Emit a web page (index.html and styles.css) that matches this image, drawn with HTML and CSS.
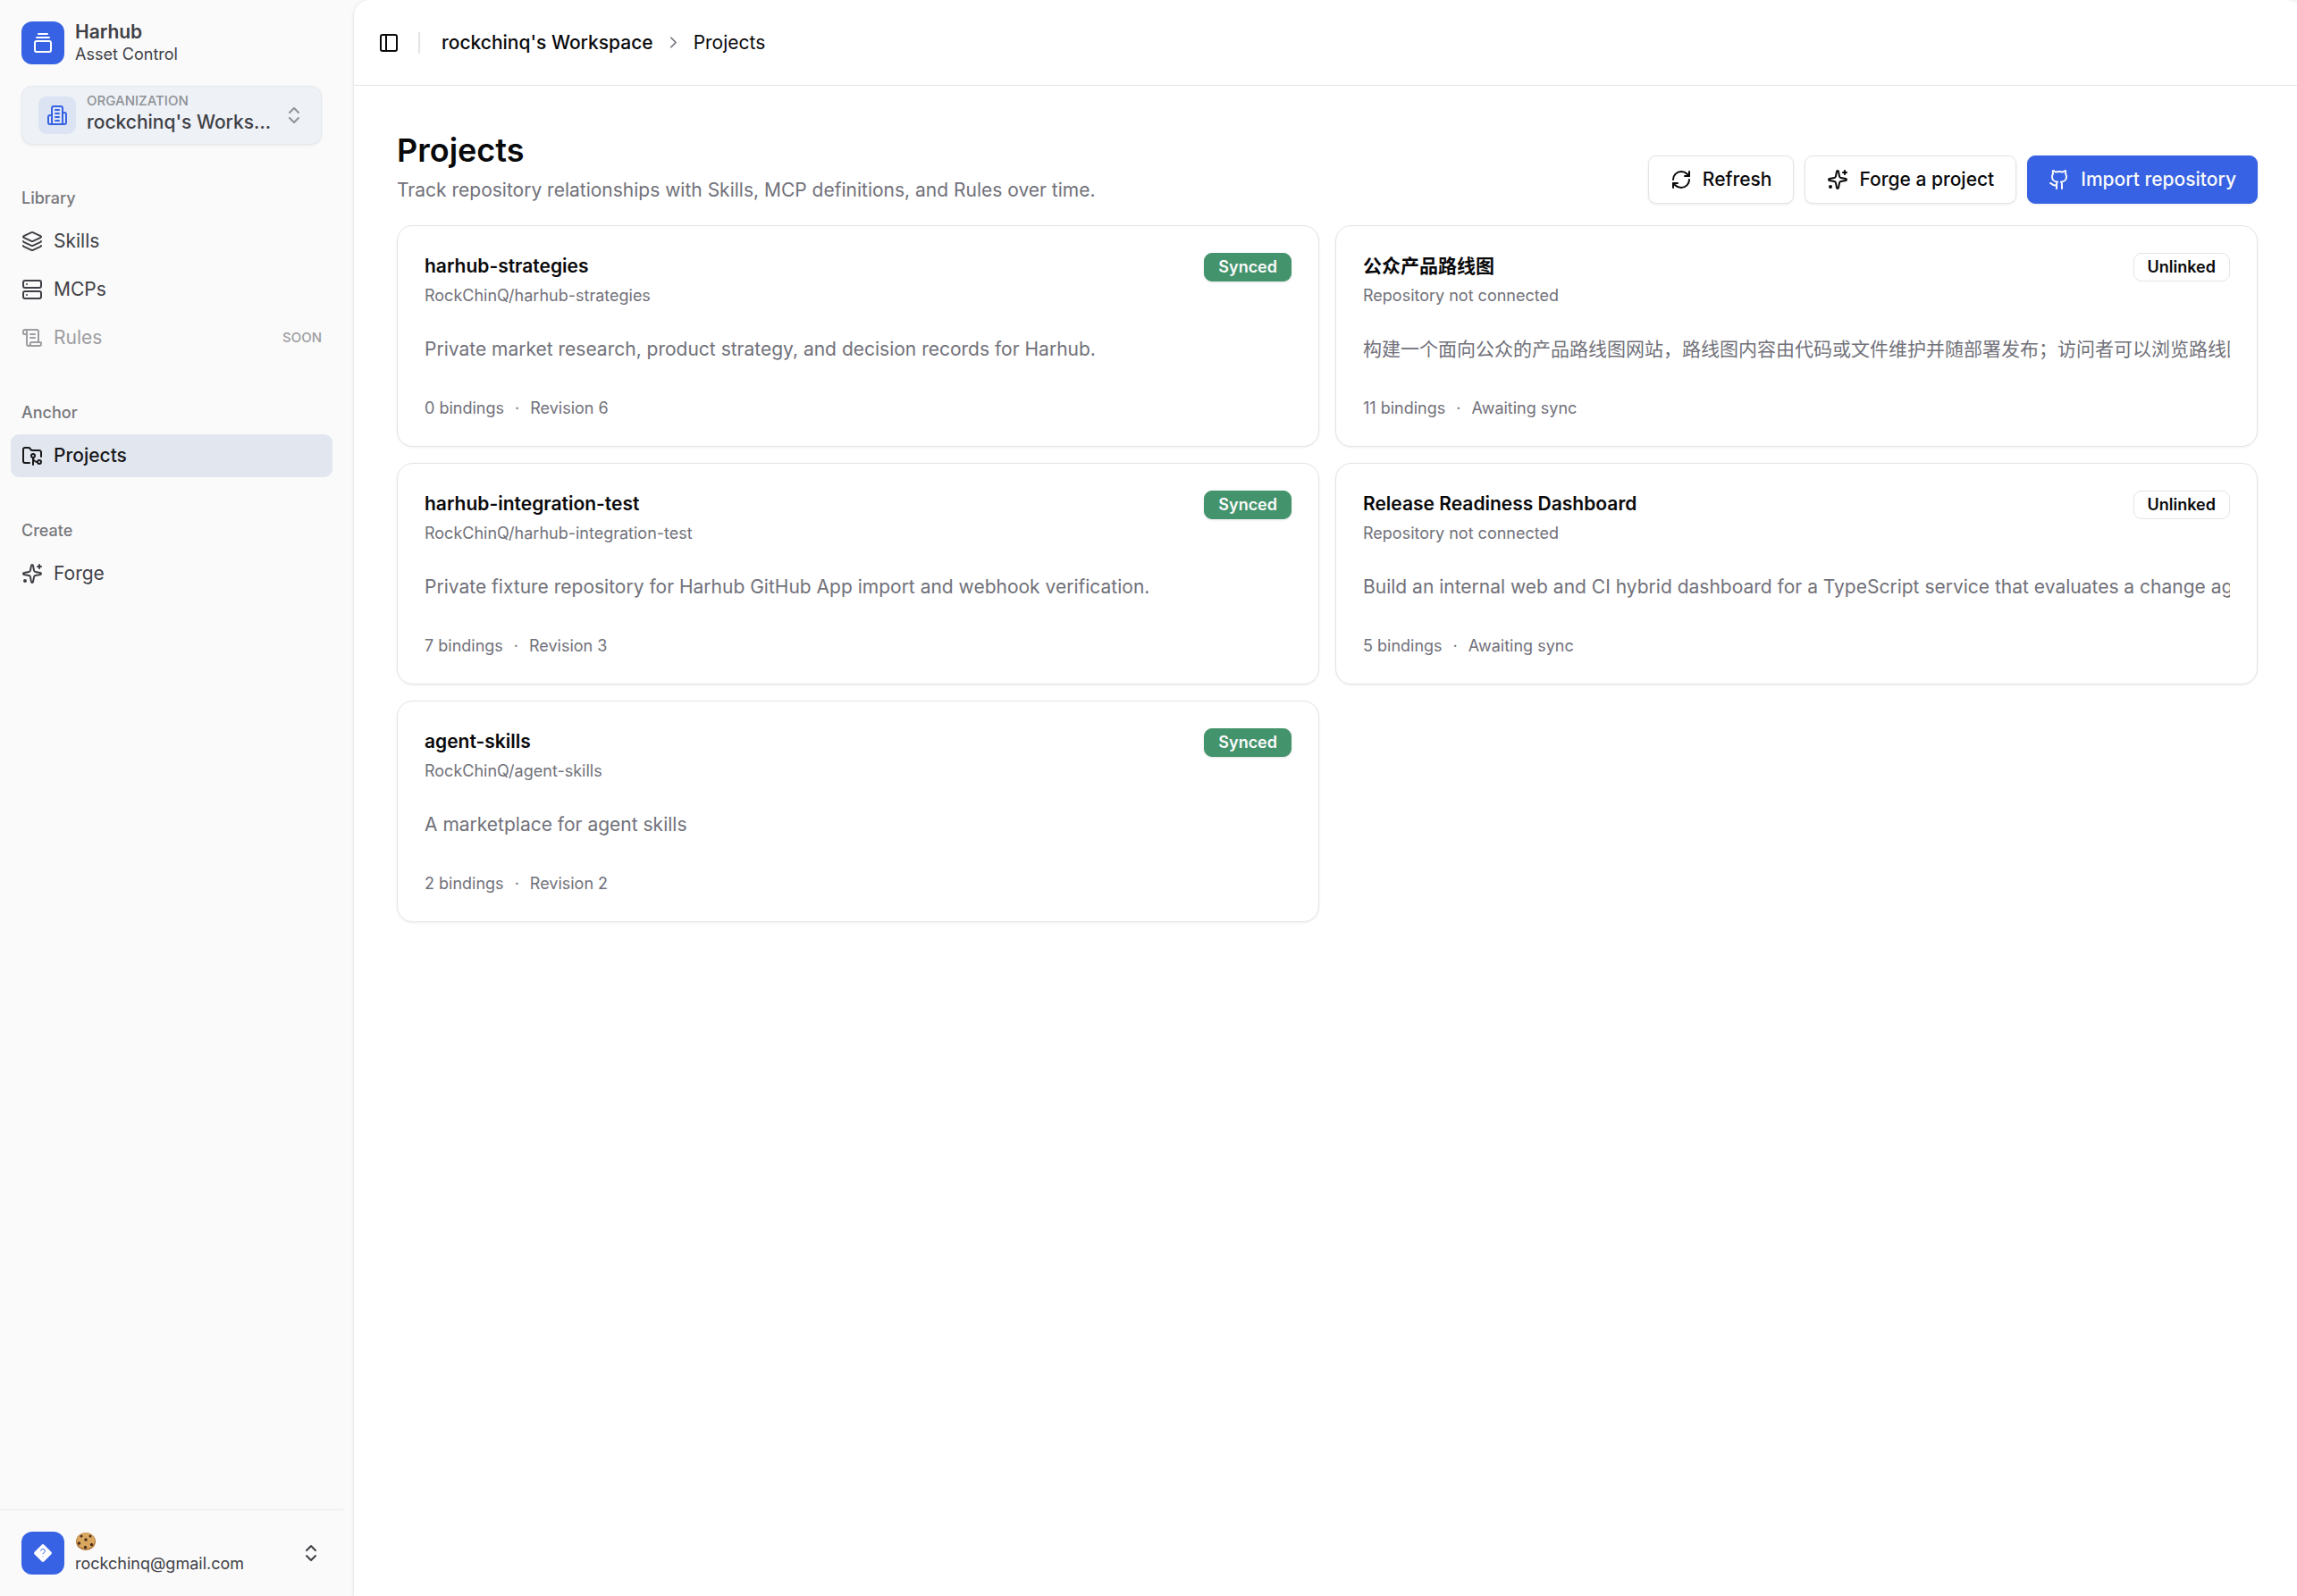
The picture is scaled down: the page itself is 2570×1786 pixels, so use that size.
FILE: index.html
```html
<!DOCTYPE html>
<html lang="en">
<head>
    <meta charset="UTF-8">
    <meta name="viewport" content="width=device-width, initial-scale=1.0">
    <title>Projects - Harhub</title>
    <link rel="stylesheet" href="styles.css">
</head>
<body>
    <svg width="0" height="0" class="sprite" aria-hidden="true">
        <symbol id="i-updown" viewBox="0 0 24 24"><path d="m7 15 5 5 5-5"/><path d="m7 9 5-5 5 5"/></symbol>
        <symbol id="i-sparkles" viewBox="0 0 24 24">
            <path d="M11.017 2.814a1 1 0 0 1 1.966 0l1.051 5.558a2 2 0 0 0 1.594 1.594l5.558 1.051a1 1 0 0 1 0 1.966l-5.558 1.051a2 2 0 0 0-1.594 1.594l-1.051 5.558a1 1 0 0 1-1.966 0l-1.051-5.558a2 2 0 0 0-1.594-1.594l-5.558-1.051a1 1 0 0 1 0-1.966l5.558-1.051a2 2 0 0 0 1.594-1.594z"/>
            <path d="M20 2v4"/><path d="M22 4h-4"/><circle cx="4" cy="20" r="2" class="dot"/>
        </symbol>
    </svg>
    <div class="app">
        <aside class="sidebar">
            <div class="sidebar-header">
                <a href="#" class="brand">
                    <span class="logo">
                        <svg class="icon" viewBox="0 0 24 24"><path d="M7 2h10"/><path d="M5 6h14"/><rect width="18" height="12" x="3" y="10" rx="2"/></svg>
                    </span>
                    <span class="brand-text">
                        <span class="brand-name">Harhub</span>
                        <span class="small">Asset Control</span>
                    </span>
                </a>
                <button type="button" class="org-switcher">
                    <span class="org-icon">
                        <svg class="icon" viewBox="0 0 24 24"><path d="M6 22V4a2 2 0 0 1 2-2h8a2 2 0 0 1 2 2v18Z"/><path d="M6 12H4a2 2 0 0 0-2 2v6a2 2 0 0 0 2 2h2"/><path d="M18 9h2a2 2 0 0 1 2 2v9a2 2 0 0 1-2 2h-2"/><path d="M10 6h4"/><path d="M10 10h4"/><path d="M10 14h4"/><path d="M10 18h4"/></svg>
                    </span>
                    <span class="org-text">
                        <span class="org-label">ORGANIZATION</span>
                        <span class="org-name">rockchinq's Workspace</span>
                    </span>
                    <svg class="icon muted-icon"><use href="#i-updown"/></svg>
                </button>
            </div>

            <nav class="nav">
                <section class="nav-group">
                    <h2 class="nav-label">Library</h2>
                    <a href="#" class="nav-item">
                        <svg class="icon" viewBox="0 0 24 24"><path d="M12.83 2.18a2 2 0 0 0-1.66 0L2.6 6.08a1 1 0 0 0 0 1.83l8.58 3.91a2 2 0 0 0 1.66 0l8.58-3.9a1 1 0 0 0 0-1.83z"/><path d="M2 12a1 1 0 0 0 .58.91l8.6 3.91a2 2 0 0 0 1.65 0l8.58-3.9A1 1 0 0 0 22 12"/><path d="M2 17a1 1 0 0 0 .58.91l8.6 3.91a2 2 0 0 0 1.65 0l8.58-3.9A1 1 0 0 0 22 17"/></svg>
                        Skills
                    </a>
                    <a href="#" class="nav-item">
                        <svg class="icon" viewBox="0 0 24 24"><rect width="20" height="8" x="2" y="2" rx="2"/><rect width="20" height="8" x="2" y="14" rx="2"/><path d="M6 6h.01"/><path d="M6 18h.01"/></svg>
                        MCPs
                    </a>
                    <a class="nav-item disabled" aria-disabled="true">
                        <svg class="icon" viewBox="0 0 24 24"><path d="M15 12h-5"/><path d="M15 8h-5"/><path d="M19 17V5a2 2 0 0 0-2-2H4"/><path d="M8 21h12a2 2 0 0 0 2-2v-1a1 1 0 0 0-1-1H11a1 1 0 0 0-1 1v1a2 2 0 1 1-4 0V5a2 2 0 1 0-4 0v2a1 1 0 0 0 1 1h3"/></svg>
                        Rules
                        <span class="soon">SOON</span>
                    </a>
                </section>
                <section class="nav-group">
                    <h2 class="nav-label">Anchor</h2>
                    <a href="#" class="nav-item active" aria-current="page">
                        <svg class="icon" viewBox="0 0 24 24"><path d="M9 20H4a2 2 0 0 1-2-2V5a2 2 0 0 1 2-2h3.9a2 2 0 0 1 1.69.9l.81 1.2a2 2 0 0 0 1.67.9H20a2 2 0 0 1 2 2v5"/><circle cx="13" cy="12" r="2"/><path d="M18 19c-2.8 0-5-2.2-5-5v8"/><circle cx="20" cy="19" r="2"/></svg>
                        Projects
                    </a>
                </section>
                <section class="nav-group">
                    <h2 class="nav-label">Create</h2>
                    <a href="#" class="nav-item">
                        <svg class="icon"><use href="#i-sparkles"/></svg>
                        Forge
                    </a>
                </section>
            </nav>

            <button type="button" class="user-menu">
                <span class="logo">
                    <svg class="avatar" viewBox="0 0 20 20"><rect x="2.500" y="2.500" width="15" height="15" rx="2" fill="#fff" transform="rotate(45 10 10)"/><path d="M7.700 7.600a2.300 2.300 0 1 1 3.300 2.100c-.7.300-1 .7-1 1.500M10 13.600v.6" fill="none" stroke="#3662e3"/></svg>
                </span>
                <span class="brand-text">
                    <svg class="cookie" viewBox="0 0 24 24" role="img" aria-label="cookie">
                        <ellipse cx="12" cy="11" rx="11" ry="10" fill="#b57c3c"/>
                        <ellipse cx="12" cy="10" rx="10" ry="9" fill="#d9a760"/>
                        <g fill="#4a2c1c"><circle cx="7" cy="5" r="1.500"/><circle cx="17" cy="5" r="1.500"/><circle cx="12" cy="9" r="1.700"/><circle cx="4.500" cy="13" r="1.700"/><circle cx="18.500" cy="14.500" r="1.700"/><circle cx="11.500" cy="17.500" r="1.700"/></g>
                    </svg>
                    <span class="small">rockchinq@gmail.com</span>
                </span>
                <svg class="icon"><use href="#i-updown"/></svg>
            </button>
        </aside>

        <main class="main">
            <header class="topbar">
                <button type="button" class="toggle" aria-label="Toggle sidebar">
                    <svg class="icon" viewBox="0 0 24 24"><rect width="18" height="18" x="3" y="3" rx="2"/><path d="M9 3v18"/></svg>
                </button>
                <span class="separator"></span>
                <nav class="breadcrumb">
                    <a href="#" class="crumb-link">rockchinq's Workspace</a>
                    <svg class="icon chevron" viewBox="0 0 24 24"><path d="m9 18 6-6-6-6"/></svg>
                    <span>Projects</span>
                </nav>
            </header>

            <div class="content">
                <div class="page-header">
                    <div>
                        <h1>Projects</h1>
                        <p class="subtitle">Track repository relationships with Skills, MCP definitions, and Rules over time.</p>
                    </div>
                    <div class="actions">
                        <button type="button" class="btn">
                            <svg class="icon" viewBox="0 0 24 24"><path d="M3 12a9 9 0 0 1 9-9 9.750 9.750 0 0 1 6.740 2.740L21 8"/><path d="M21 3v5h-5"/><path d="M21 12a9 9 0 0 1-9 9 9.750 9.750 0 0 1-6.740-2.740L3 16"/><path d="M8 16H3v5"/></svg>
                            Refresh
                        </button>
                        <button type="button" class="btn">
                            <svg class="icon"><use href="#i-sparkles"/></svg>
                            Forge a project
                        </button>
                        <button type="button" class="btn btn-primary">
                            <svg class="icon" viewBox="0 0 24 24"><path d="M15 22v-4a4.800 4.800 0 0 0-1-3.500c3 0 6-2 6-5.500.08-1.250-.27-2.480-1-3.500.28-1.150.28-2.350 0-3.500 0 0-1 0-3 1.500-2.640-.5-5.360-.5-8 0C6 2 5 2 5 2c-.3 1.150-.3 2.350 0 3.500A5.403 5.403 0 0 0 4 9c0 3.500 3 5.500 6 5.500-.39.490-.68 1.050-.85 1.650-.17.600-.22 1.230-.15 1.850v4"/><path d="M9 18c-4.510 2-5-2-7-2"/></svg>
                            Import repository
                        </button>
                    </div>
                </div>

                <div class="project-grid">
                    <article class="card">
                        <div class="card-header">
                            <div>
                                <h3>harhub-strategies</h3>
                                <p class="repo">RockChinQ/harhub-strategies</p>
                            </div>
                            <span class="badge synced">Synced</span>
                        </div>
                        <p class="description">Private market research, product strategy, and decision records for Harhub.</p>
                        <div class="meta"><span>0 bindings</span><span>·</span><span>Revision 6</span></div>
                    </article>
                    <article class="card">
                        <div class="card-header">
                            <div>
                                <h3 lang="zh-CN">公众产品路线图</h3>
                                <p class="repo">Repository not connected</p>
                            </div>
                            <span class="badge">Unlinked</span>
                        </div>
                        <p class="description" lang="zh-CN">构建一个面向公众的产品路线图网站，路线图内容由代码或文件维护并随部署发布；访问者可以浏览路线图</p>
                        <div class="meta"><span>11 bindings</span><span>·</span><span>Awaiting sync</span></div>
                    </article>
                    <article class="card">
                        <div class="card-header">
                            <div>
                                <h3>harhub-integration-test</h3>
                                <p class="repo">RockChinQ/harhub-integration-test</p>
                            </div>
                            <span class="badge synced">Synced</span>
                        </div>
                        <p class="description">Private fixture repository for Harhub GitHub App import and webhook verification.</p>
                        <div class="meta"><span>7 bindings</span><span>·</span><span>Revision 3</span></div>
                    </article>
                    <article class="card">
                        <div class="card-header">
                            <div>
                                <h3>Release Readiness Dashboard</h3>
                                <p class="repo">Repository not connected</p>
                            </div>
                            <span class="badge">Unlinked</span>
                        </div>
                        <p class="description">Build an internal web and CI hybrid dashboard for a TypeScript service that evaluates a change against</p>
                        <div class="meta"><span>5 bindings</span><span>·</span><span>Awaiting sync</span></div>
                    </article>
                    <article class="card">
                        <div class="card-header">
                            <div>
                                <h3>agent-skills</h3>
                                <p class="repo">RockChinQ/agent-skills</p>
                            </div>
                            <span class="badge synced">Synced</span>
                        </div>
                        <p class="description">A marketplace for agent skills</p>
                        <div class="meta"><span>2 bindings</span><span>·</span><span>Revision 2</span></div>
                    </article>
                </div>
            </div>
        </main>
    </div>
</body>
</html>
```
FILE: styles.css
```css
* {
    box-sizing: border-box;
}
body {
    margin: 0;
    font-family: Inter, "Noto Sans CJK SC", sans-serif;
    font-size: 21px;
    line-height: 30px;
    color: #09090b;
    background-color: #fafafa;
}
h1, h2, h3, p {
    margin: 0;
}
a {
    color: inherit;
    text-decoration: none;
}
button {
    font: inherit;
    color: inherit;
    background: none;
    border: none;
    padding: 0;
    text-align: left;
    cursor: pointer;
}
.sprite {
    position: absolute;
}
.icon {
    width: 24px;
    height: 24px;
    flex-shrink: 0;
    fill: none;
    stroke: currentColor;
    stroke-width: 2;
    stroke-linecap: round;
    stroke-linejoin: round;
}
.dot {
    fill: currentColor;
    stroke: none;
}
.small {
    font-size: 18px;
    line-height: 24px;
}
.app {
    display: flex;
    min-height: 100vh;
}

/* sidebar */
.sidebar {
    width: 384px;
    flex-shrink: 0;
    display: flex;
    flex-direction: column;
    color: #3f3f46;
}
.sidebar-header {
    display: flex;
    flex-direction: column;
    gap: 24px;
    padding: 24px;
}
.brand {
    display: flex;
    align-items: center;
    gap: 12px;
    height: 48px;
}
.logo {
    width: 48px;
    height: 48px;
    flex-shrink: 0;
    display: flex;
    align-items: center;
    justify-content: center;
    border-radius: 12px;
    background-color: #3662e3;
    color: #fff;
}
.brand-text {
    flex: 1;
    display: flex;
    flex-direction: column;
}
.brand-name {
    font-weight: 600;
    line-height: 26px;
}
.org-switcher {
    display: flex;
    align-items: center;
    gap: 12px;
    height: 66px;
    padding: 0 18px;
    border: 1px solid #e4e8ee;
    border-radius: 12px;
    background-color: #eef1f6;
    box-shadow: 0 1px 3px rgba(0, 0, 0, 0.06);
}
.org-icon {
    width: 42px;
    height: 42px;
    flex-shrink: 0;
    display: flex;
    align-items: center;
    justify-content: center;
    border-radius: 9px;
    background-color: #dce4f4;
    color: #3662e3;
}
.org-text {
    flex: 1;
    min-width: 0;
    display: flex;
    flex-direction: column;
}
.org-label {
    font-size: 15px;
    line-height: 16px;
    font-weight: 500;
    color: #8f9196;
}
.org-name {
    font-weight: 500;
    line-height: 32px;
    overflow: hidden;
    white-space: nowrap;
    text-overflow: ellipsis;
}
.muted-icon {
    color: #8f9196;
}
.nav {
    flex: 1;
}
.nav-group {
    display: flex;
    flex-direction: column;
    gap: 6px;
    padding: 12px 12px 24px;
}
.nav-label {
    margin-bottom: -6px;
    padding: 0 12px;
    font-size: 18px;
    font-weight: 500;
    line-height: 48px;
    color: #77777c;
}
.nav-item {
    display: flex;
    align-items: center;
    gap: 12px;
    height: 48px;
    padding: 0 12px;
    border-radius: 9px;
}
.nav-item.active {
    background-color: #e2e7ef;
    color: #18181b;
    font-weight: 500;
}
.nav-item.disabled {
    color: #9d9da1;
}
.soon {
    margin-left: auto;
    font-size: 15px;
    font-weight: 500;
}
.user-menu {
    display: flex;
    align-items: center;
    gap: 12px;
    padding: 24px;
    border-top: 1px solid #ebebec;
}
.avatar {
    width: 20px;
    height: 20px;
}
.cookie {
    width: 24px;
    height: 24px;
}

/* main panel */
.main {
    flex: 1;
    min-width: 0;
    margin-left: 12px;
    background-color: #fff;
    border-radius: 18px 12px 0 0 / 18px 6px 0 0;
    box-shadow: 0 1px 4px rgba(0, 0, 0, 0.14);
}
.topbar {
    display: flex;
    align-items: center;
    gap: 12px;
    height: 96px;
    padding: 0 18px;
    border-bottom: 1px solid #e4e4e7;
}
.toggle {
    width: 42px;
    height: 42px;
    display: flex;
    align-items: center;
    justify-content: center;
}
.separator {
    width: 2px;
    height: 24px;
    background-color: #e4e4e7;
}
.breadcrumb {
    display: flex;
    align-items: center;
    gap: 12px;
    padding-left: 12px;
}
.crumb-link {
    font-weight: 500;
}
.chevron {
    width: 21px;
    height: 21px;
    color: #71717a;
}
.content {
    padding: 48px 44px 48px 48px;
}
.page-header {
    display: flex;
    align-items: flex-end;
    justify-content: space-between;
    margin-bottom: 24px;
}
h1 {
    font-size: 36px;
    font-weight: 600;
    line-height: 48px;
}
.subtitle {
    margin-top: 6px;
    color: #71717a;
}
.actions {
    display: flex;
    gap: 12px;
}
.btn {
    display: flex;
    align-items: center;
    gap: 12px;
    height: 54px;
    padding: 0 24px;
    border: 1px solid #e4e4e7;
    border-radius: 9px;
    background-color: #fff;
    box-shadow: 0 1px 3px rgba(0, 0, 0, 0.08);
    font-weight: 500;
}
.btn-primary {
    padding: 0 23px;
    border-color: #3662e3;
    background-color: #3662e3;
    color: #fafafa;
}

/* project cards */
.project-grid {
    display: grid;
    grid-template-columns: repeat(2, minmax(0, 1fr));
    gap: 18px;
}
.card {
    padding: 30px;
    border: 1px solid #e4e4e7;
    border-radius: 18px;
    background-color: #fff;
    box-shadow: 0 1px 3px rgba(0, 0, 0, 0.06);
}
.card-header {
    display: flex;
    align-items: flex-start;
    justify-content: space-between;
}
h3 {
    font-size: 21px;
    font-weight: 600;
    line-height: 30px;
}
.repo {
    margin-top: 6px;
    font-size: 18px;
    line-height: 24px;
    color: #71717a;
}
.badge {
    padding: 3px 15px;
    border: 1px solid #e4e4e7;
    border-radius: 9px;
    font-size: 18px;
    font-weight: 600;
    line-height: 24px;
}
.badge.synced {
    border-color: #43936c;
    background-color: #43936c;
    color: #fafafa;
    box-shadow: 0 1px 3px rgba(0, 0, 0, 0.1);
}
.description {
    margin: 30px 0 36px;
    line-height: 36px;
    color: #71717a;
    overflow: hidden;
    white-space: nowrap;
}
.meta {
    display: flex;
    gap: 12px;
    font-size: 18px;
    line-height: 24px;
    color: #71717a;
}
```
